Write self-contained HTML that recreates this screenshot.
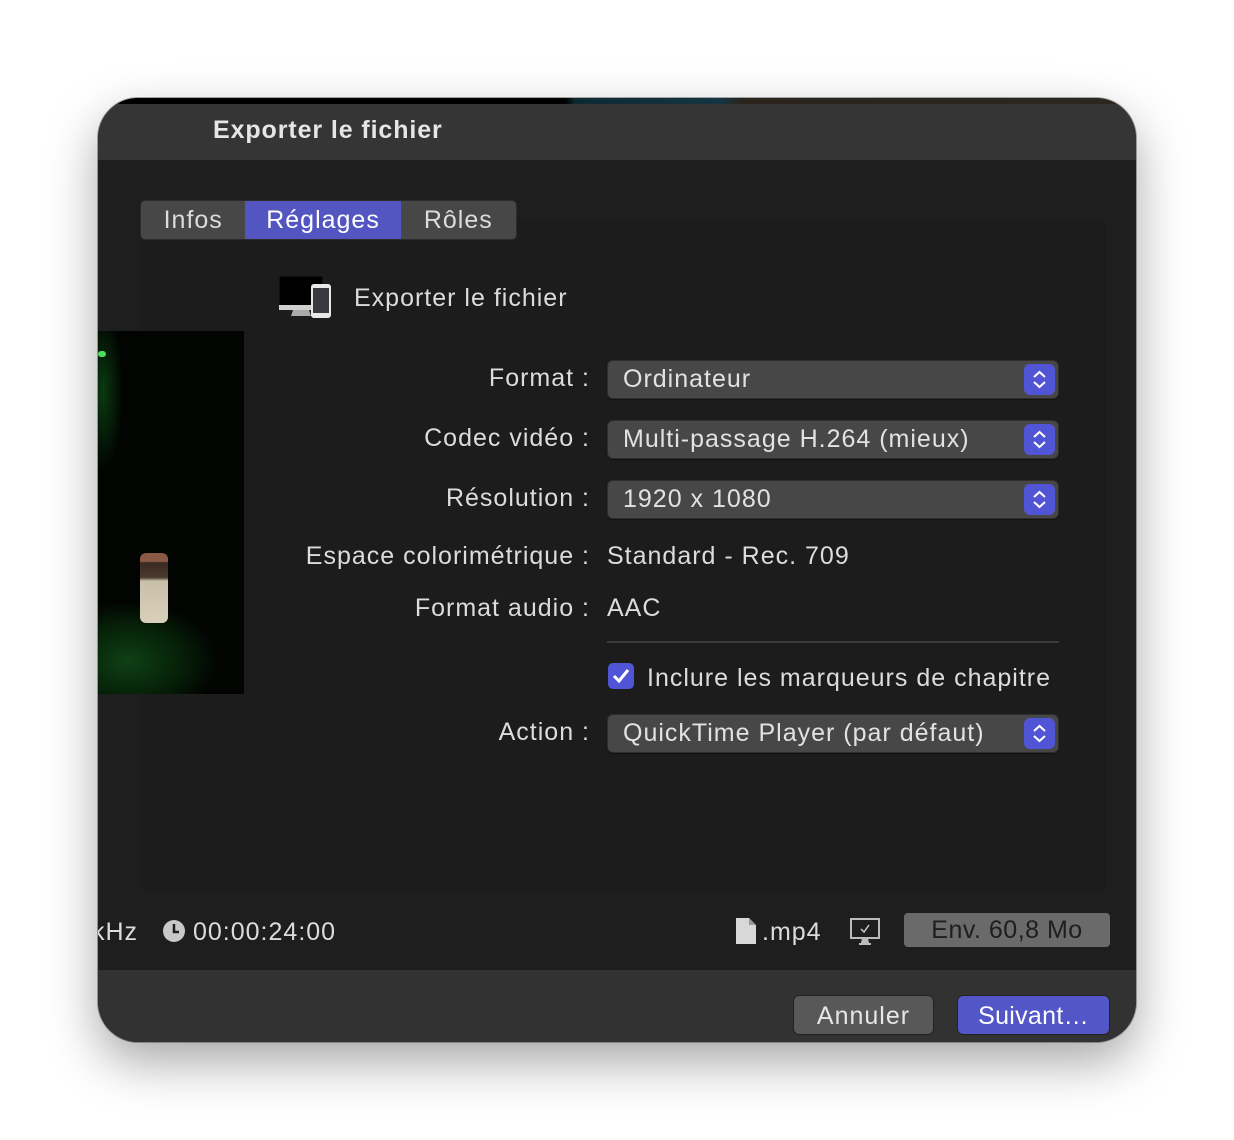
<!DOCTYPE html>
<html><head><meta charset="utf-8"><style>
*{margin:0;padding:0;box-sizing:border-box}
body{width:1234px;height:1140px;background:#fff;font-family:"Liberation Sans",sans-serif;position:relative;overflow:hidden;letter-spacing:1px}
.win{position:absolute;left:98px;top:98px;width:1038px;height:944px;border-radius:40px;overflow:hidden;background:#1e1e1e;box-shadow:0 20px 50px rgba(0,0,0,.35),0 0 0 1px rgba(0,0,0,.3)}
.strip{position:absolute;left:0;top:0;width:100%;height:7px;background:linear-gradient(90deg,#000 0,#000 45%,#0d2a33 46%,#143542 60%,#2a241d 62%,#2b2620 100%)}
.title{position:absolute;left:0;top:6px;width:100%;height:56px;background:#353535}
.title span{position:absolute;left:115px;top:12px;font-size:25px;font-weight:bold;color:#e6e6e6;letter-spacing:0.9px}
.panel{position:absolute;left:42px;top:122px;width:966px;height:670px;background:#1c1c1c}
.tabs{position:absolute;left:42px;top:102px;height:40px;width:377px;border-radius:5px;background:#474747;border:1px solid #2c2c2c;overflow:hidden;display:flex;font-size:25px;color:#dcdcdc}
.tabs div{height:100%;line-height:39px;text-align:center}
.t1{width:105px}.t2{width:156px;background:#5356c0;color:#fff}.t3{width:116px}
.txt{position:absolute;color:#dcdcdc;font-size:25px;white-space:nowrap;margin-top:2px}
.lbl{position:absolute;color:#dcdcdc;font-size:25px;text-align:right;right:546px;white-space:nowrap;margin-top:2px}
.pop{position:absolute;left:509px;width:452px;height:39px;border-radius:6px;background:#474747;border:1px solid #2e2e2e;box-shadow:0 1px 1px rgba(0,0,0,.4)}
.pop span{position:absolute;left:15px;top:4px;font-size:25px;color:#e2e2e2}
.pop i{position:absolute;right:3px;top:3px;width:31px;height:31px;border-radius:6px;background:#5055d6}
.video{position:absolute;left:0;top:233px;width:146px;height:363px;background:radial-gradient(ellipse 90px 60px at 30px 330px,#0e4014 0,#062008 60%,transparent 100%),radial-gradient(ellipse 20px 80px at 5px 60px,#0a3a10,transparent),#020402}
.foot{position:absolute;left:0;top:872px;width:100%;height:72px;background:#323232}
.btn{position:absolute;height:40px;border-radius:6px;font-size:25px;text-align:center;line-height:38px}
</style></head><body>
<div class="win">
<div class="strip"></div>
<div class="title"><span>Exporter le fichier</span></div>
<div class="panel"></div>
<div class="tabs"><div class="t1">Infos</div><div class="t2">Réglages</div><div class="t3">Rôles</div></div>
<svg style="position:absolute;left:181px;top:178px" width="54" height="44" viewBox="0 0 54 44">
<rect x="0" y="0" width="44" height="34" fill="#000" stroke="#222"/>
<rect x="0" y="29" width="44" height="5" fill="#cfcfcf"/>
<path d="M14 34h16l2 6h-20z" fill="#aaa"/>
<rect x="32" y="8" width="20" height="34" rx="3" fill="#e8e8e8"/>
<rect x="34" y="12" width="16" height="25" fill="#3a3a3e"/>
</svg>
<div class="txt" style="left:256px;top:184px">Exporter le fichier</div>
<div class="video"><div style="position:absolute;left:0;top:20px;width:8px;height:6px;border-radius:3px;background:#4fdc5a"></div>
<div style="position:absolute;left:42px;top:222px;width:28px;height:70px;background:linear-gradient(#8a5a44 0,#8a5a44 12%,#3a2a22 14%,#4a3a30 35%,#c8c0a8 40%,#d8d0b8 100%);border-radius:6px"></div></div>
<div class="lbl" style="top:264px">Format :</div>
<div class="pop" style="top:262px"><span>Ordinateur</span><i><svg width="31" height="31" viewBox="0 0 31 31"><path d="M10 13l5.5-5 5.5 5M10 18l5.5 5 5.5-5" fill="none" stroke="#fff" stroke-width="2"/></svg></i></div>
<div class="lbl" style="top:324px">Codec vidéo :</div>
<div class="pop" style="top:322px"><span>Multi-passage H.264 (mieux)</span><i><svg width="31" height="31" viewBox="0 0 31 31"><path d="M10 13l5.5-5 5.5 5M10 18l5.5 5 5.5-5" fill="none" stroke="#fff" stroke-width="2"/></svg></i></div>
<div class="lbl" style="top:384px">Résolution :</div>
<div class="pop" style="top:382px"><span>1920 x 1080</span><i><svg width="31" height="31" viewBox="0 0 31 31"><path d="M10 13l5.5-5 5.5 5M10 18l5.5 5 5.5-5" fill="none" stroke="#fff" stroke-width="2"/></svg></i></div>
<div class="lbl" style="top:442px">Espace colorimétrique :</div>
<div class="txt" style="left:509px;top:442px">Standard - Rec. 709</div>
<div class="lbl" style="top:494px">Format audio :</div>
<div class="txt" style="left:509px;top:494px">AAC</div>
<div style="position:absolute;left:509px;top:543px;width:452px;height:2px;background:#3a3a3a"></div>
<div style="position:absolute;left:510px;top:565px;width:26px;height:26px;border-radius:5px;background:#5055d6"><svg width="26" height="26" viewBox="0 0 26 26"><path d="M6 13l5 5 9-11" fill="none" stroke="#fff" stroke-width="3"/></svg></div>
<div class="txt" style="left:549px;top:564px">Inclure les marqueurs de chapitre</div>
<div class="lbl" style="top:618px">Action :</div>
<div class="pop" style="top:616px"><span>QuickTime Player (par défaut)</span><i><svg width="31" height="31" viewBox="0 0 31 31"><path d="M10 13l5.5-5 5.5 5M10 18l5.5 5 5.5-5" fill="none" stroke="#fff" stroke-width="2"/></svg></i></div>
<div class="txt" style="left:-6px;top:818px">kHz</div>
<svg style="position:absolute;left:64px;top:821px" width="24" height="24" viewBox="0 0 24 24"><circle cx="12" cy="12" r="11" fill="#c8c8c8"/><path d="M12 5v8h5" fill="none" stroke="#1e1e1e" stroke-width="2.5"/></svg>
<div class="txt" style="left:95px;top:818px">00:00:24:00</div>
<svg style="position:absolute;left:638px;top:820px" width="20" height="26" viewBox="0 0 20 26"><path d="M0 0h13l7 7v19h-20z" fill="#d8d8d8"/><path d="M13 0v7h7" fill="#999"/></svg>
<div class="txt" style="left:664px;top:818px">.mp4</div>
<svg style="position:absolute;left:752px;top:820px" width="30" height="28" viewBox="0 0 30 28"><rect x="1" y="1" width="28" height="19" fill="#1e1e1e" stroke="#bbb" stroke-width="2"/><path d="M11 11l3 3 5-7" fill="none" stroke="#ccc" stroke-width="1.5"/><path d="M12 20h6l1 5h-8z" fill="#bbb"/><rect x="9" y="25" width="12" height="2" fill="#bbb"/></svg>
<div class="btn" style="left:806px;top:815px;width:206px;height:34px;line-height:35px;border-radius:4px;background:#6a6a6a;color:#1e1e1e;font-size:25px;letter-spacing:0.5px">Env. 60,8 Mo</div>
<div class="foot"></div>
<div class="btn" style="left:695px;top:897px;width:141px;background:#585858;border:1px solid #222;color:#e6e6e6;line-height:40px">Annuler</div>
<div class="btn" style="left:859px;top:897px;width:153px;background:#5356c6;border:1px solid #222;color:#fff;line-height:40px;letter-spacing:0.3px">Suivant…</div>
</div>
</body></html>
